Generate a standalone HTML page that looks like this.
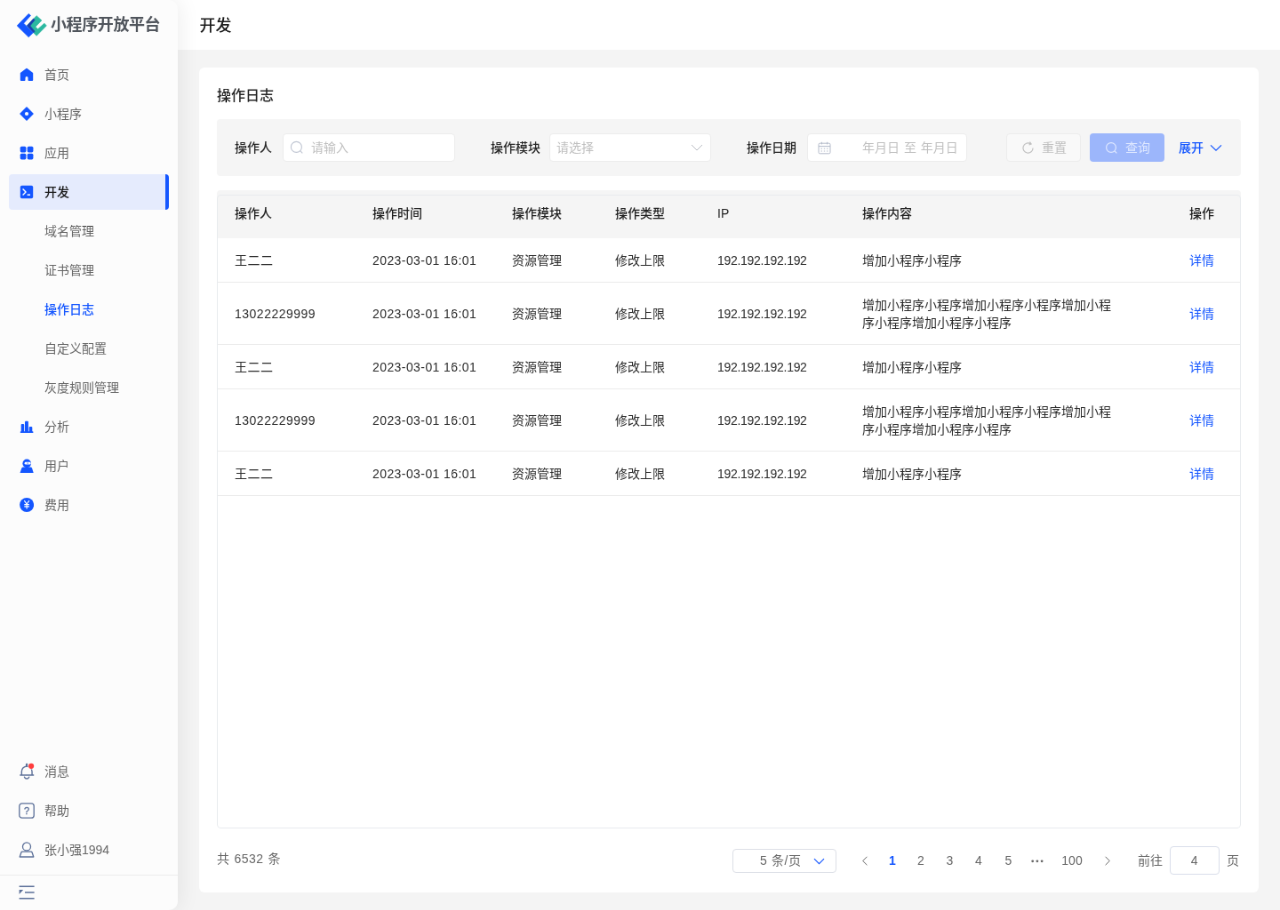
<!DOCTYPE html>
<html lang="zh-CN">
<head>
<meta charset="utf-8">
<title>小程序开放平台 - 操作日志</title>
<style>
*{box-sizing:border-box;margin:0;padding:0}
html,body{width:1280px;height:910px;overflow:hidden;background:#f4f4f4}
body{font-family:"Liberation Sans","Noto Sans CJK SC",sans-serif;font-size:14px;color:#333;-webkit-font-smoothing:antialiased}
#app{position:absolute;left:0;top:0;width:1440px;height:1024px;transform:scale(0.888889);transform-origin:0 0;background:#f4f4f4;overflow:hidden;will-change:transform}
.side{position:absolute;left:0;top:0;width:200px;height:1024px;background:#fcfcfc;border-radius:0 10px 10px 0;box-shadow:2px 0 24px rgba(0,0,0,.075);z-index:5}
.logo svg{position:absolute;left:11.25px;top:5.625px;display:block}
.logo span{position:absolute;left:57px;top:15.1px;line-height:26px;font-size:18px;font-weight:700;color:#50555c;letter-spacing:-.4px;white-space:nowrap}
.nav{position:absolute;left:10px;top:64px;width:180px}
.it{position:relative;height:40px;margin-bottom:4px;border-radius:4px;display:flex;align-items:center;padding-left:12px;color:#666;font-size:14px}
.it{padding-bottom:2px}
.it svg{width:16px;height:16px;display:block;margin-right:12px;flex:none;position:relative;top:1px}
.it.sub{padding-left:40px}
.it.b{padding-left:11px}
.it.b svg{width:18px;height:18px;margin-right:11px}
.it.on{background:#e5ebfd;color:#1a1a1a;font-weight:500}
.it.on:after{content:"";position:absolute;right:0;top:0;width:4px;height:40px;background:#1456ff;border-radius:0 4px 4px 0}
.it.cur{color:#1456ff;font-weight:500}
.bot{position:absolute;left:10px;top:848px;width:180px}
.fold{position:absolute;left:0;top:984px;width:200px;height:40px;border-top:1px solid #ececec}
.fold svg{position:absolute;left:21px;top:10px}
.head{position:absolute;left:180px;top:0;width:1260px;height:56px;background:#fff}
.head h1{position:absolute;left:44.5px;top:14.6px;font-size:18px;line-height:28px;font-weight:500;color:#1a1a1a}
.card{position:absolute;left:224px;top:76px;width:1192px;height:928px;background:#fff;border-radius:6px}
.card h2{position:absolute;left:20px;top:20px;font-size:16px;line-height:24px;font-weight:500;color:#262626}
.filter{position:absolute;left:20px;top:58px;width:1152px;height:64px;background:#f5f5f5;border-radius:4px}
.filter .lb{position:absolute;top:21px;line-height:22px;font-size:14px;font-weight:500;color:#262626}
.inp{position:absolute;top:16px;height:32px;background:#fff;border:1px solid #ececec;border-radius:4px;color:#bfbfbf;font-size:14px;line-height:30px}
.btn{position:absolute;top:16px;height:32px;border-radius:4px;font-size:14px;line-height:30px}
.tbl{position:absolute;left:20px;top:138px;width:1152px;height:718px;border-radius:4px;overflow:hidden}
.tbl:after{content:"";position:absolute;left:0;top:4.5px;right:0;bottom:0;border:1px solid #e8ebee;border-radius:4px;pointer-events:none}
.tr{display:flex;align-items:center;border-bottom:1px solid #ebebeb;min-height:50px;line-height:20px;font-size:14px;color:#2b2b2b}
.tr.th{height:54px;min-height:54px;background:#f5f5f5;font-weight:500;color:#1f1f1f;border-bottom:none}
.tr>div{padding:15px 0 14px 20px;flex:none}
.tr.th>div{padding:16px 0 18px 20px}
.c1{width:155px}.c2{width:157px}.c3{width:116px}.c4{width:115px}.c5{width:163px}.c6{width:368px}.c7{width:76px}
.tr:not(.th) .c1{letter-spacing:.5px}.tr:not(.th) .c2{letter-spacing:.42px}
.tr:not(.th) .c5{letter-spacing:-.3px}
.c6 p{width:280px}
.c7 a,.lk{color:#1456ff;text-decoration:none}
.pg{position:absolute;left:20px;top:876px;width:1152px;height:32px;font-size:14px;color:#666;line-height:32px}
.pg>*{position:absolute;top:0}
.pg .n{width:32px;text-align:center}
</style>
</head>
<body>
<div id="app">
  <div class="head"><h1>开发</h1></div>

  <div class="side">
    <div class="logo">
      <svg width="56.25" height="45" viewBox="0 0 1138 910"><g stroke-linejoin="round" stroke-width="14"><path d="M609 236 L726 343 L583 489 L639 541 L787 409 L836 463 L609 693 L392 463 Z" fill="#2bb8a0" stroke="#2bb8a0"/><path d="M393 463 L538 304 L569 332 L462 466 L569 594 L538 622 Z" fill="#1b3fae" stroke="#1b3fae"/><path d="M166 463 L429 191 L476 232 L316 408 L532 624 L429 723 Z" fill="#1456ff" stroke="#1456ff"/></g></svg>
      <span>小程序开放平台</span>
    </div>
    <div class="nav">
      <div class="it"><svg viewBox="0 0 16 16"><path d="M8 1.7 1.8 6.5V14H5.5V11.7a2.5 2.7 0 0 1 5 0V14h3.7V6.5z" fill="#1456ff" stroke="#1456ff" stroke-width="2" stroke-linejoin="round"/></svg>首页</div>
      <div class="it"><svg viewBox="0 0 16 16"><path d="M8 1.1 14.9 8 8 14.9 1.1 8z" fill="#1456ff" stroke="#1456ff" stroke-width="1.6" stroke-linejoin="round"/><circle cx="8" cy="8" r="2.1" fill="#fcfcfc"/></svg>小程序</div>
      <div class="it"><svg viewBox="0 0 16 16"><g fill="#1456ff"><rect x=".7" y=".7" width="6.7" height="6.7" rx="1.6"/><rect x="8.7" y=".7" width="6.7" height="6.7" rx="1.6"/><rect x=".7" y="8.7" width="6.7" height="6.7" rx="1.6"/><rect x="8.7" y="8.7" width="6.7" height="6.7" rx="1.6"/></g></svg>应用</div>
      <div class="it on"><svg viewBox="0 0 16 16"><rect x=".8" y=".8" width="14.4" height="14.4" rx="1.8" fill="#1456ff"/><path d="M3.6 4.6 7 8l-3.4 3.4" stroke="#fff" stroke-width="1.4" fill="none"/><path d="M8.6 11.2h3.4" stroke="#fff" stroke-width="1.5" fill="none"/></svg>开发</div>
      <div class="it sub">域名管理</div>
      <div class="it sub">证书管理</div>
      <div class="it sub cur">操作日志</div>
      <div class="it sub">自定义配置</div>
      <div class="it sub">灰度规则管理</div>
      <div class="it"><svg viewBox="0 0 16 16"><g fill="#1456ff"><rect x="1.7" y="5" width="3.5" height="9.5" rx="1"/><rect x="6" y="1.7" width="3.9" height="12.8" rx="1"/><rect x="10.7" y="8.1" width="3.6" height="6.4" rx="1"/><rect x=".8" y="13.2" width="14.6" height="1.9" rx=".6"/></g></svg>分析</div>
      <div class="it"><svg viewBox="0 0 16 16"><circle cx="8.2" cy="5.4" r="4.8" fill="#1456ff"/><path d="M4.2 9.5h8a2 2 0 0 1 1.9 1.3l1.6 5.1H.5l1.8-5.1a2 2 0 0 1 1.9-1.3z" fill="#1456ff"/><rect x="5.6" y="3.8" width="7" height="2.7" rx="1.35" fill="#fff"/><rect x="8.65" y="4.5" width=".9" height="1.3" fill="#1456ff"/></svg>用户</div>
      <div class="it"><svg viewBox="0 0 16 16"><circle cx="8.1" cy="8" r="8" fill="#1456ff"/><path d="M5.3 3.2 8.1 7l2.8-3.8M5.3 7.6h5.6M5.3 9.9h5.6M8.1 7v5.6" stroke="#fff" stroke-width="1.15" fill="none"/></svg>费用</div>
    </div>
    <div class="bot">
      <div class="it b"><svg viewBox="0 0 18 18" style="overflow:visible"><g fill="none" stroke="#5b6f98" stroke-width="1.4"><path d="M3.35 13V9a5.85 5.85 0 0 1 11.7 0v4M1.3 13h15.9"/><path d="M9.1 1v1.6" stroke-width="2.4" stroke-linecap="round"/><path d="M6.5 15.2a2.8 2.8 0 0 0 5.2 0" stroke-linecap="round"/></g><circle cx="14.1" cy="2.8" r="3.7" fill="#fcfcfc"/><circle cx="14.1" cy="2.8" r="3.1" fill="#ff3d3d"/></svg>消息</div>
      <div class="it b"><svg viewBox="0 0 18 18"><rect x=".8" y=".8" width="16.4" height="16.4" rx="3" fill="none" stroke="#5b6f98" stroke-width="1.3"/><text x="9" y="12.8" font-size="11" font-family="Liberation Sans,sans-serif" font-weight="400" stroke="#5b6f98" stroke-width=".3" text-anchor="middle" fill="#5b6f98">?</text></svg>帮助</div>
      <div class="it b"><svg viewBox="0 0 18 18"><g fill="none" stroke="#5b6f98" stroke-width="1.3" stroke-linejoin="round"><circle cx="9" cy="5.4" r="4.5"/><path d="M4 11.2h10a1.2 1.2 0 0 1 1.1.8l1.7 5H1.2l1.7-5a1.2 1.2 0 0 1 1.1-.8z"/></g></svg>张小强1994</div>
    </div>
    <div class="fold"><svg width="18" height="18" viewBox="0 0 18 18"><path d="M.6 2.2h17M7 9h10.6M.6 15.8h17" stroke="#5b6f98" stroke-width="1.4"/><path d="M.6 6h4.6L.6 11z" fill="#5b6f98"/></svg></div>
  </div>

  <div class="card">
    <h2>操作日志</h2>
    <div class="filter">
      <span class="lb" style="left:20px">操作人</span>
      <div class="inp" style="left:74px;width:194px;padding-left:31px">请输入<svg style="position:absolute;left:7px;top:7px" width="16" height="16" viewBox="0 0 16 16"><circle cx="7.4" cy="7.4" r="6" fill="none" stroke="#bfc5d2" stroke-width="1.1"/><path d="M11.7 11.7l2.6 2.6" stroke="#bfc5d2" stroke-width="1.1"/></svg></div>
      <span class="lb" style="left:308px">操作模块</span>
      <div class="inp" style="left:374px;width:182px;padding-left:7px">请选择<svg style="position:absolute;right:8px;top:10px" width="14" height="10" viewBox="0 0 14 10"><path d="M1 2l6 6 6-6" fill="none" stroke="#b9bcc3" stroke-width="1"/></svg></div>
      <span class="lb" style="left:596px">操作日期</span>
      <div class="inp" style="left:664px;width:180px"><svg style="position:absolute;left:11px;top:8px" width="15" height="15" viewBox="0 0 15 15"><rect x="1" y="2.2" width="13" height="11.6" rx="1.4" fill="none" stroke="#b3bac9"/><path d="M1 5.6h13M4.4.8v2.6M10.6.8v2.6" stroke="#b3bac9" fill="none"/><path d="M3.6 8.2h1.4M6.8 8.2h1.4M10 8.2h1.4M3.6 11h1.4M6.8 11h1.4M10 11h1.4" stroke="#b3bac9"/></svg><span style="position:absolute;left:61px;top:0;white-space:nowrap;word-spacing:1px">年月日 至 年月日</span></div>
      <div class="btn" style="left:888px;width:84px;background:#f9f9f9;border:1px solid #ececec;color:#bfbfbf;padding-left:39px"><svg style="position:absolute;left:16px;top:7.5px" width="15" height="15" viewBox="0 0 14 14"><path d="M12.2 7A5.2 5.2 0 1 1 9.6 2.5" fill="none" stroke="#bfbfbf" stroke-width="1.1"/><path d="M8.8 .6l1.6 2.2-2.4 1" fill="none" stroke="#bfbfbf" stroke-width="1.1"/></svg>重置</div>
      <div class="btn" style="left:982px;width:84px;background:#9cb6fb;color:#dfe8ff;line-height:32px;padding-left:40px"><svg style="position:absolute;left:17px;top:9px" width="15" height="15" viewBox="0 0 15 15"><circle cx="7" cy="7" r="5.4" fill="none" stroke="#dfe8ff" stroke-width="1.2"/><path d="M11 11l2.4 2.4" stroke="#dfe8ff" stroke-width="1.2"/></svg>查询</div>
      <div class="btn lk" style="left:1082px;line-height:32px;font-weight:500">展开<svg style="position:absolute;left:35px;top:12px" width="14" height="9" viewBox="0 0 14 9"><path d="M1 1.4l6 5.8 6-5.8" fill="none" stroke="#1456ff" stroke-width="1.2"/></svg></div>
    </div>

    <div class="tbl">
      <div class="tr th"><div class="c1">操作人</div><div class="c2">操作时间</div><div class="c3">操作模块</div><div class="c4">操作类型</div><div class="c5">IP</div><div class="c6">操作内容</div><div class="c7">操作</div></div>
      <div class="tr"><div class="c1">王二二</div><div class="c2">2023-03-01 16:01</div><div class="c3">资源管理</div><div class="c4">修改上限</div><div class="c5">192.192.192.192</div><div class="c6"><p>增加小程序小程序</p></div><div class="c7"><a>详情</a></div></div>
      <div class="tr"><div class="c1">13022229999</div><div class="c2">2023-03-01 16:01</div><div class="c3">资源管理</div><div class="c4">修改上限</div><div class="c5">192.192.192.192</div><div class="c6"><p>增加小程序小程序增加小程序小程序增加小程序小程序增加小程序小程序</p></div><div class="c7"><a>详情</a></div></div>
      <div class="tr"><div class="c1">王二二</div><div class="c2">2023-03-01 16:01</div><div class="c3">资源管理</div><div class="c4">修改上限</div><div class="c5">192.192.192.192</div><div class="c6"><p>增加小程序小程序</p></div><div class="c7"><a>详情</a></div></div>
      <div class="tr"><div class="c1">13022229999</div><div class="c2">2023-03-01 16:01</div><div class="c3">资源管理</div><div class="c4">修改上限</div><div class="c5">192.192.192.192</div><div class="c6"><p>增加小程序小程序增加小程序小程序增加小程序小程序增加小程序小程序</p></div><div class="c7"><a>详情</a></div></div>
      <div class="tr"><div class="c1">王二二</div><div class="c2">2023-03-01 16:01</div><div class="c3">资源管理</div><div class="c4">修改上限</div><div class="c5">192.192.192.192</div><div class="c6"><p>增加小程序小程序</p></div><div class="c7"><a>详情</a></div></div>
    </div>

    <div class="pg">
      <span style="left:0;top:-1.6px;letter-spacing:.5px;word-spacing:.6px">共 6532 条</span>
      <div style="left:580px;top:2.6px;width:117px;height:27.6px;border:1px solid #dcdfe6;border-radius:4px;line-height:25.6px;color:#666"><span style="position:absolute;left:30px;top:0;white-space:nowrap;letter-spacing:.6px">5 条/页</span><svg style="position:absolute;left:89.5px;top:9px" width="13" height="8" viewBox="0 0 13 8"><path d="M1 1.2l5.5 5.4L12 1.2" fill="none" stroke="#1456ff" stroke-width="1.15"/></svg></div>
      <svg style="left:724.5px;top:10.5px" width="8" height="11" viewBox="0 0 8 11"><path d="M6.4 .8 1.7 5.5l4.7 4.7" fill="none" stroke="#666" stroke-width="1"/></svg>
      <span class="n" style="left:744px;color:#1456ff;font-weight:700">1</span>
      <span class="n" style="left:776px">2</span>
      <span class="n" style="left:808.5px">3</span>
      <span class="n" style="left:841px">4</span>
      <span class="n" style="left:874.5px">5</span>
      <svg style="left:915.6px;top:14.5px" width="14" height="4" viewBox="0 0 14 4"><g fill="#666"><circle cx="1.7" cy="1.8" r="1.4"/><circle cx="6.9" cy="1.8" r="1.4"/><circle cx="12.1" cy="1.8" r="1.4"/></g></svg>
      <span class="n" style="left:940px;width:44px">100</span>
      <svg style="left:997.7px;top:10.5px" width="8" height="11" viewBox="0 0 8 11"><path d="M1.6 .8l4.7 4.7-4.7 4.7" fill="none" stroke="#666" stroke-width="1"/></svg>
      <span style="left:1036px">前往</span>
      <div style="left:1072px;top:-.2px;width:55.5px;height:32.4px;border:1px solid #d9deea;border-radius:4px;text-align:center;line-height:31.4px;color:#666">4</div>
      <span style="left:1136px">页</span>
    </div>
  </div>
</div>
</body>
</html>
